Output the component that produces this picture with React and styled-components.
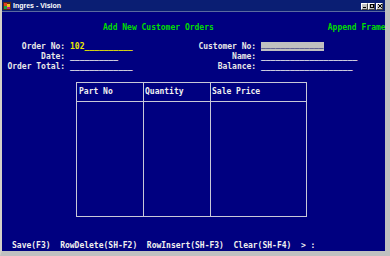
import React from 'react'
import styled, { createGlobalStyle } from 'styled-components'

const GlobalStyle = createGlobalStyle`
  html, body {
    margin: 0;
    padding: 0;
    background: #c0c0c0;
  }
`

const Frame = styled.div`
  width: 390px;
  height: 256px;
  box-sizing: border-box;
  display: flex;
  flex-direction: column;
  background: #c0c0c0;
  border-left: 2px solid #d4d0c8;
  border-right: 5px solid #c0c0c0;
  border-bottom: 5px solid #c0c0c0;
  box-shadow: inset -1px -1px 0 #808080;
  overflow: hidden;
`

const TitleBar = styled.div`
  height: 11px;
  flex: none;
  display: flex;
  align-items: center;
  gap: 2px;
  padding: 0 2px 0 1px;
  background: #0a1e73;
  border-bottom: 1px solid #5a6aa0;
  color: #ffffff;
  font: bold 7px/11px 'Liberation Sans', Arial, sans-serif;
`

const AppIcon = styled.svg`
  width: 8px;
  height: 8px;
  flex: none;
`

const TitleText = styled.span`
  flex: 1;
  white-space: nowrap;
`

const WinButtons = styled.div`
  display: flex;
  margin-top: 1px;
`

const WinButton = styled.div`
  width: 7px;
  height: 7px;
  box-sizing: border-box;
  margin-left: ${p => (p.gap ? '1px' : '0')};
  background: #c0c0c0;
  border: 1px solid;
  border-color: #ffffff #404040 #404040 #ffffff;
  display: flex;
  align-items: center;
  justify-content: center;
`

const Screen = styled.div`
  flex: 1;
  min-height: 0;
  display: flex;
  flex-direction: column;
  background: #000080;
  color: #e8e8e8;
  font-family: 'DejaVu Sans Mono', 'Liberation Mono', monospace;
  font-size: 8px;
  font-weight: bold;
  line-height: 10px;
  white-space: pre;
  overflow: hidden;
`

const Heading = styled.div`
  display: flex;
  padding: 11px 0 0 101px;
  color: #00dd00;
`

const FrameName = styled.span`
  margin-left: ${p => p.offset}px;
`

const Form = styled.div`
  display: grid;
  grid-template-columns: 68px 128.4px 62.6px 1fr;
  grid-auto-rows: 10px;
  margin-top: 9px;
`

const Label = styled.span`
  text-align: right;
  padding-right: 1ch;
`

const Field = styled.span`
  color: ${p => p.color || '#e0e0e8'};
`

const GreyField = styled.span`
  justify-self: start;
  align-self: start;
  line-height: 6px;
  height: 9px;
  background: #c0c0c0;
  color: #58588c;
`

const Table = styled.div`
  width: 231px;
  height: 135px;
  flex: none;
  box-sizing: border-box;
  margin: 10px 0 0 74px;
  border: 1px solid #c8c8d8;
  display: grid;
  grid-template-columns: 66px 67px 1fr;
  grid-template-rows: 19px 1fr;
`

const Cell = styled.div`
  box-sizing: border-box;
  padding-left: ${p => (p.first ? 2 : 1)}px;
  border-left: ${p => (p.first ? 'none' : '1px solid #c8c8d8')};
  border-bottom: ${p => (p.head ? '1px solid #c8c8d8' : 'none')};
  line-height: 18px;
  color: #f0f0f0;
`

const Menu = styled.div`
  display: flex;
  flex: none;
  gap: 2ch;
  margin-top: auto;
  padding: 0 0 1px 10px;
  line-height: 9px;
  color: #f0f0f0;
`

const columns = ['Part No', 'Quantity', 'Sale Price']
const menuItems = ['Save(F3)', 'RowDelete(SH-F2)', 'RowInsert(SH-F3)', 'Clear(SH-F4)', '> :']

export default function App() {
  return (
    <>
      <GlobalStyle />
      <Frame>
        <TitleBar>
          <AppIcon viewBox="0 0 8 8">
            <rect x="0" y="0" width="8" height="8" fill="#5a2a10" />
            <rect x="1" y="1" width="3" height="3" fill="#e04020" />
            <rect x="4" y="2" width="3" height="3" fill="#f0c020" />
            <rect x="1" y="4" width="3" height="3" fill="#20a040" />
            <rect x="4" y="5" width="3" height="2" fill="#c02080" />
          </AppIcon>
          <TitleText>Ingres - Vision</TitleText>
          <WinButtons>
            <WinButton>
              <svg width="3" height="3" viewBox="0 0 3 3"><rect x="0" y="2" width="3" height="1" fill="#000" /></svg>
            </WinButton>
            <WinButton>
              <svg width="4" height="4" viewBox="0 0 4 4"><rect x="0.5" y="0.5" width="3" height="3" fill="none" stroke="#000" strokeWidth="1" /></svg>
            </WinButton>
            <WinButton gap>
              <svg width="4" height="4" viewBox="0 0 4 4"><path d="M0 0L4 4M4 0L0 4" stroke="#000" strokeWidth="1" /></svg>
            </WinButton>
          </WinButtons>
        </TitleBar>
        <Screen>
          <Heading>
            <span>Add New Customer Orders</span>
            <FrameName offset={114}>Append Frame</FrameName>
          </Heading>
          <Form>
            <Label>Order No:</Label>
            <Field color="#e8e800">102__________</Field>
            <Label>Customer No:</Label>
            <GreyField>_____________</GreyField>

            <Label>Date:</Label>
            <Field>__________</Field>
            <Label>Name:</Label>
            <Field>____________________</Field>

            <Label>Order Total:</Label>
            <Field>_____________</Field>
            <Label>Balance:</Label>
            <Field>___________________</Field>
          </Form>
          <Table>
            {columns.map((c, i) => (
              <Cell key={c} head first={i === 0}>{c}</Cell>
            ))}
            {columns.map((c, i) => (
              <Cell key={c + '-body'} first={i === 0} />
            ))}
          </Table>
          <Menu>
            {menuItems.map(m => (
              <span key={m}>{m}</span>
            ))}
          </Menu>
        </Screen>
      </Frame>
    </>
  )
}
